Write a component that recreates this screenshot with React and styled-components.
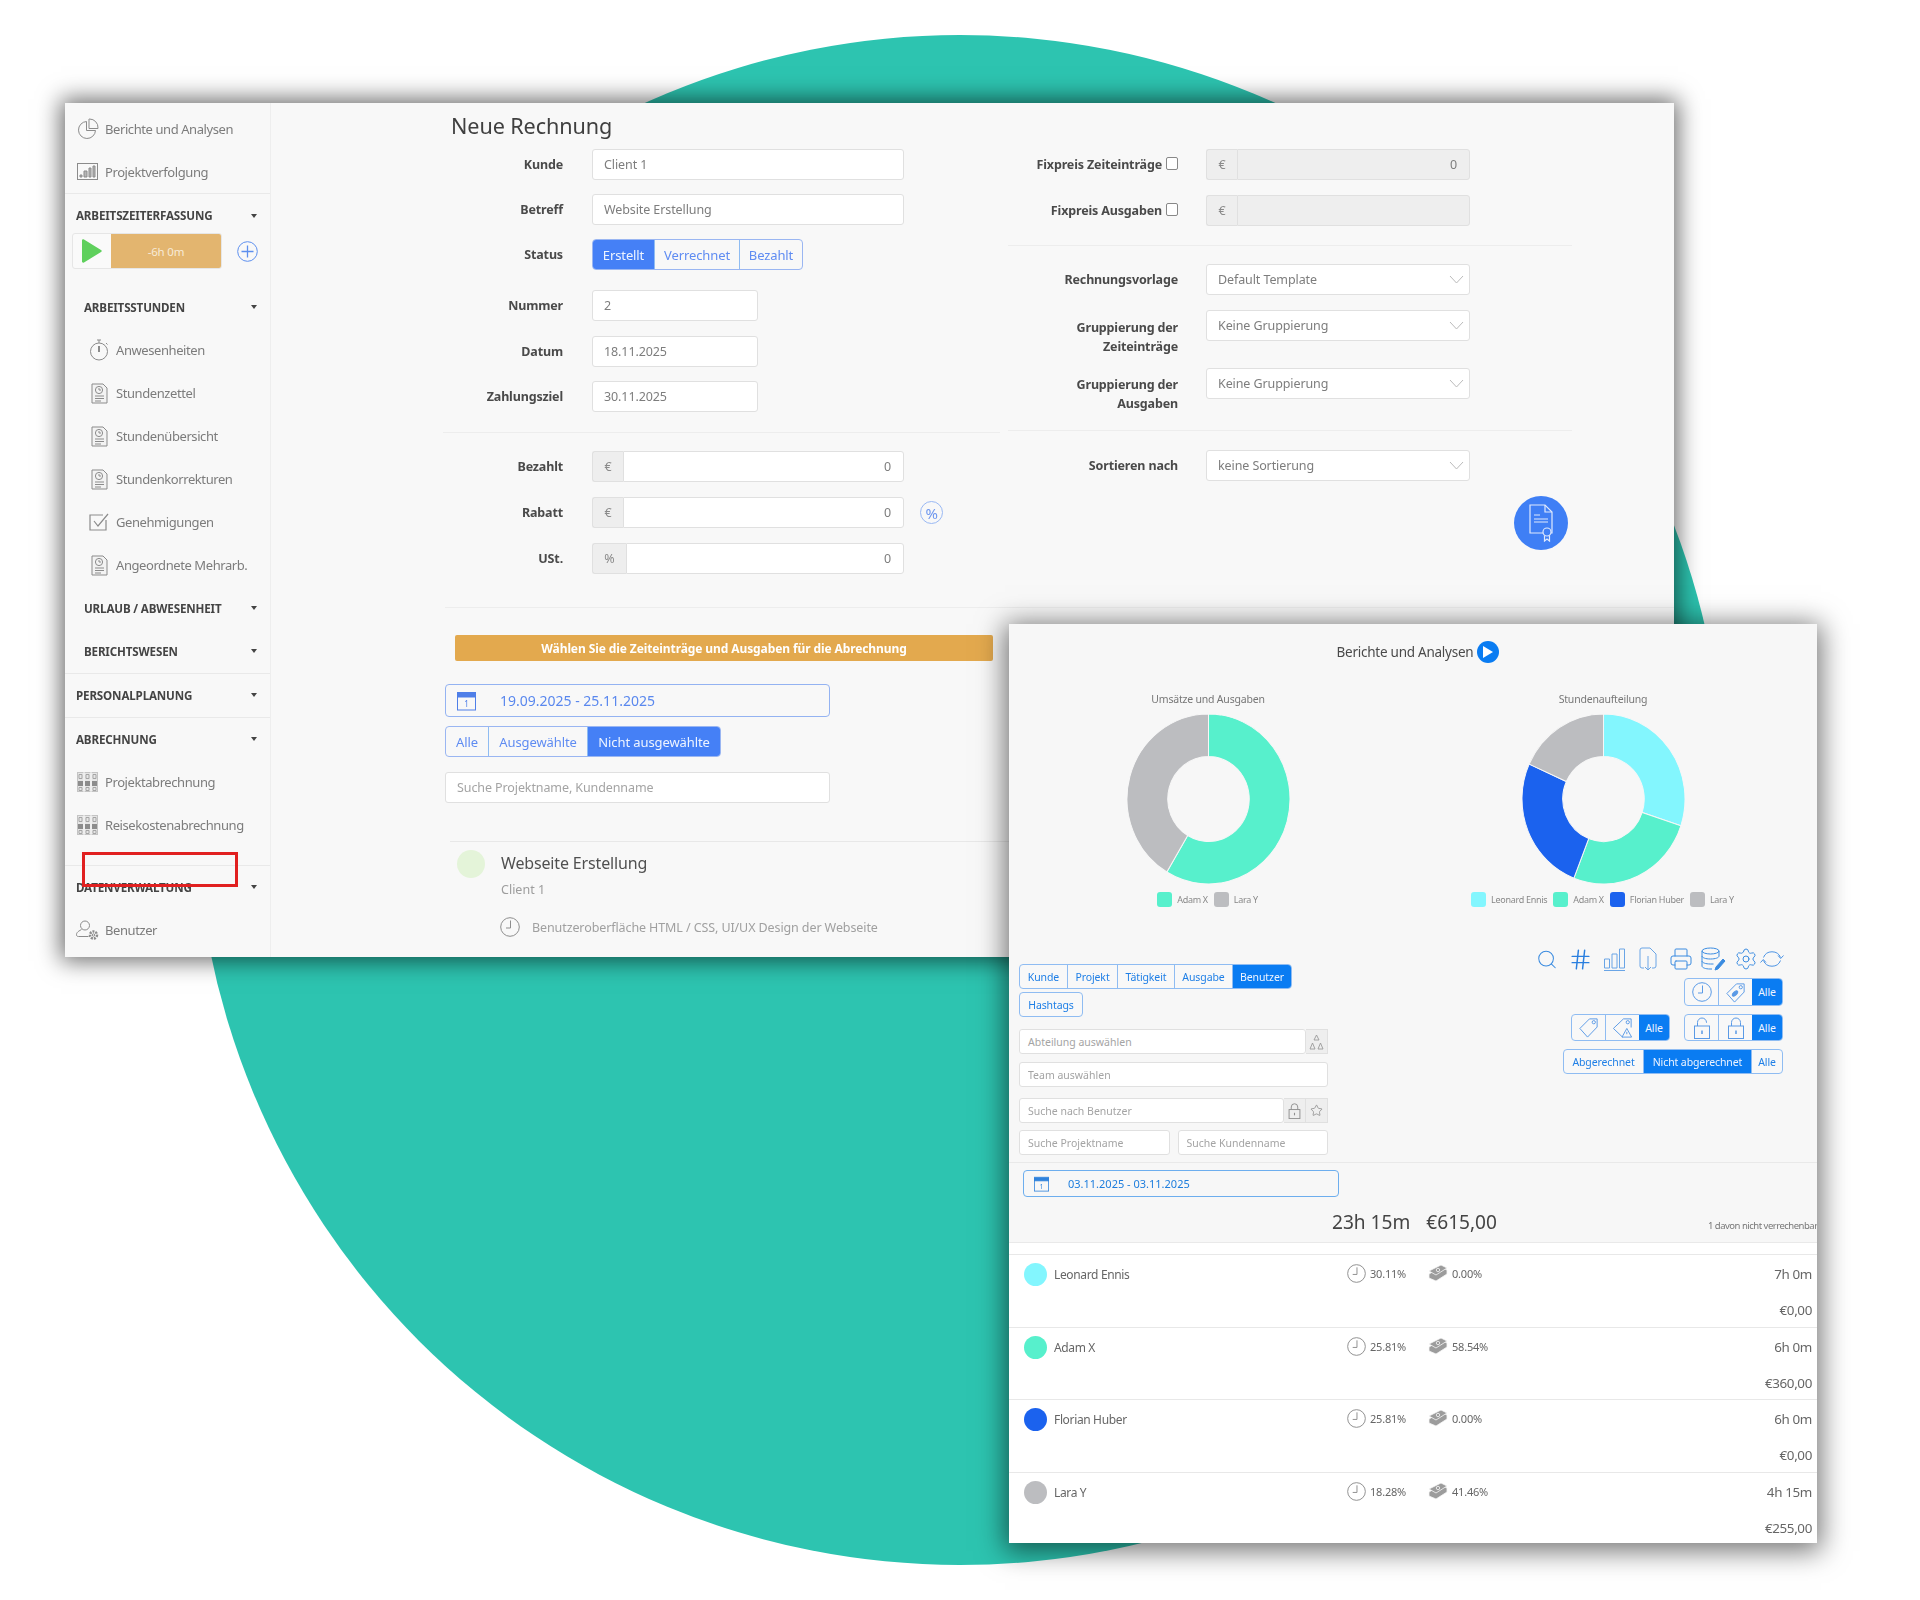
import React from 'react'
import styled, { createGlobalStyle } from 'styled-components'
import { Search, Hash, Printer, Settings, Star } from 'lucide-react'

const GlobalStyle = createGlobalStyle`
  body {
    margin: 0;
    background: #fff;
    font-family: "Noto Sans", "Liberation Sans", sans-serif;
    color: #555;
  }
`

const Page = styled.div`
  position: relative;
  width: 1920px;
  height: 1600px;
  overflow: hidden;
  background: #fff;
`

const Backdrop = styled.div`
  position: absolute;
  left: 195px;
  top: 35px;
  width: 1530px;
  height: 1530px;
  border-radius: 50%;
  background: #2dc4b0;
`

const MainWindow = styled.div`
  position: absolute;
  left: 65px;
  top: 103px;
  width: 1609px;
  height: 854px;
  display: flex;
  overflow: hidden;
  background: #f8f8f8;
  box-shadow: 0 0 22px 4px rgba(0, 0, 0, 0.58);
  filter: blur(0.45px);
`

const ReportWindow = styled.div`
  position: absolute;
  left: 1009px;
  top: 624px;
  width: 808px;
  height: 919px;
  overflow: hidden;
  background: #f7f7f7;
  box-shadow: 0 4px 26px 4px rgba(0, 0, 0, 0.55);
  filter: blur(0.45px);
`

/* sidebar */

const Sidebar = styled.aside`
  position: relative;
  flex: 0 0 205px;
  padding-top: 4px;
  border-right: 1px solid #eeeeee;
  box-sizing: content-box;
`

const NavItem = styled.div`
  display: flex;
  align-items: center;
  height: 43px;
  padding-left: ${(p) => (p.$sub ? '23px' : '10px')};
  font-size: 13px;
  letter-spacing: -0.42px;
  color: #7c7c7c;
`

const NavIcon = styled.span`
  display: flex;
  justify-content: center;
  width: ${(p) => (p.$sub ? '22px' : '25px')};
  margin-right: ${(p) => (p.$sub ? '6px' : '5px')};
`

const NavHeading = styled.div`
  display: flex;
  align-items: center;
  justify-content: space-between;
  height: 43px;
  padding: 0 13px 0 ${(p) => (p.$sub ? '19px' : '11px')};
  font-size: 11.6px;
  font-weight: 700;
  letter-spacing: -0.15px;
  color: #444;
`

const Caret = styled.i`
  width: 0;
  height: 0;
  border-left: 3.5px solid transparent;
  border-right: 3.5px solid transparent;
  border-top: 4px solid #444;
`

const NavRule = styled.div`
  height: 1px;
  margin-top: ${(p) => p.$mt || 0}px;
  background: #e9e9e9;
`

const TimerRow = styled.div`
  display: flex;
  align-items: center;
  height: 36px;
  margin: -4px 0 16.5px 7px;
`

const Timer = styled.div`
  display: flex;
  width: 150px;
  height: 36px;
  border: 1px solid #e6e6e6;
  border-radius: 3px;
  box-sizing: border-box;
  overflow: hidden;
  background: #fafafa;
`

const PlayCell = styled.span`
  display: flex;
  align-items: center;
  justify-content: center;
  width: 38px;
`

const TimerValue = styled.span`
  flex: 1;
  display: flex;
  align-items: center;
  justify-content: center;
  background: #e3b56f;
  color: #f7ead6;
  font-size: 11.5px;
  letter-spacing: -0.2px;
`

const AddCircle = styled.span`
  display: flex;
  margin-left: 15px;
`

const RedMark = styled.div`
  position: absolute;
  left: 17px;
  top: 749px;
  width: 156px;
  height: 35px;
  border: 3px solid #e12020;
  box-sizing: border-box;
`

/* main form */

const Main = styled.main`
  flex: 1;
  min-width: 0;
  padding-left: 172px;
`

const Title = styled.h1`
  margin: 7px 0 7px 8px;
  font-size: 21.6px;
  line-height: 32px;
  font-weight: 400;
  letter-spacing: -0.1px;
  color: #404040;
`

const Columns = styled.div`
  display: flex;
`

const LeftColumn = styled.div`
  width: 557px;
`

const RightColumn = styled.div`
  width: 564px;
  margin-left: 8px;
`

const FormRow = styled.div`
  display: grid;
  grid-template-columns: ${(p) => (p.$wide ? '170px 264px' : '120px 312px auto')};
  column-gap: ${(p) => (p.$wide ? '28px' : '29px')};
  margin-bottom: ${(p) => p.$mb ?? 14}px;
  align-items: start;
`

const FieldLabel = styled.label`
  display: flex;
  justify-content: flex-end;
  align-items: center;
  min-height: 31px;
  text-align: right;
  font-size: 12.5px;
  line-height: 19px;
  font-weight: 700;
  letter-spacing: -0.15px;
  color: #4a4a4a;
  padding-top: ${(p) => p.$pt || 0}px;
`

const Check = styled.i`
  flex: none;
  width: 10px;
  height: 11px;
  margin: -3px 0 0 4px;
  border: 1px solid #888;
  border-radius: 2px;
  background: #fff;
`

const TextField = styled.div`
  display: flex;
  align-items: center;
  height: 31px;
  width: ${(p) => p.$w || '100%'};
  padding: 0 ${(p) => (p.$right ? '12px' : p.$select ? '5px' : '11px')} 0 ${(p) => (p.$right ? '12px' : '11px')};
  justify-content: ${(p) => (p.$right ? 'flex-end' : 'space-between')};
  box-sizing: border-box;
  border: 1px solid #e0e0e0;
  border-radius: 3px;
  background: ${(p) => (p.$off ? '#eeeeee' : '#fff')};
  font-size: 12.5px;
  letter-spacing: -0.1px;
  color: ${(p) => (p.$placeholder ? '#a4a4a4' : '#7d7d7d')};
`

const InputGroup = styled.div`
  display: flex;
  width: 100%;
`

const Addon = styled.span`
  flex: none;
  display: flex;
  align-items: center;
  justify-content: center;
  width: ${(p) => p.$w || 31}px;
  height: 31px;
  box-sizing: border-box;
  border: 1px solid #e0e0e0;
  border-right: 0;
  border-radius: 3px 0 0 3px;
  background: #eeeeee;
  font-size: 12.5px;
  color: #8a8a8a;
`

const GroupField = styled(TextField)`
  flex: 1;
  border-radius: 0 3px 3px 0;
`

const Seg = styled.div`
  display: inline-flex;
  justify-self: start;
  overflow: hidden;
  height: ${(p) => p.$h || 31}px;
  margin-top: ${(p) => p.$mt || 0}px;
  box-sizing: border-box;
  border: 1px solid ${(p) => (p.$vivid ? '#8fbcf2' : '#9ab6f2')};
  border-radius: 4px;
  background: #f8f8f8;
`

const SegBtn = styled.span`
  display: flex;
  align-items: center;
  justify-content: center;
  width: ${(p) => p.$w}px;
  font-size: ${(p) => p.$size || 13}px;
  letter-spacing: -0.1px;
  box-sizing: border-box;
  color: ${(p) => (p.$on ? '#eef4ff' : p.$vivid ? '#1f7fe6' : '#5f8cf2')};
  background: ${(p) => (p.$on ? (p.$vivid ? '#0a7cf2' : '#4580f6') : 'transparent')};
  & + & {
    border-left: 1px solid ${(p) => (p.$vivid ? '#8fbcf2' : '#9ab6f2')};
  }
`

const PercentBadge = styled.span`
  display: flex;
  align-items: center;
  justify-content: center;
  align-self: center;
  width: 23px;
  height: 23px;
  margin-left: -13px;
  border: 1.5px solid #9ab9f4;
  border-radius: 50%;
  box-sizing: border-box;
  font-size: 15px;
  letter-spacing: -0.5px;
  color: #6d96ee;
`

const Rule = styled.div`
  height: 1px;
  margin-bottom: ${(p) => p.$mb || 0}px;
  background: #ededed;
`

const FabRow = styled.div`
  display: flex;
  justify-content: flex-end;
  margin: 15px 4px 0 0;
`

const Fab = styled.span`
  display: flex;
  align-items: center;
  justify-content: center;
  width: 54px;
  height: 54px;
  border-radius: 50%;
  background: #3f7ff5;
`

const Banner = styled.div`
  width: 538px;
  height: 26px;
  margin: 27px 0 23px 10px;
  display: flex;
  align-items: center;
  justify-content: center;
  border-radius: 2px;
  background: #e3a94e;
  color: #fff;
  font-size: 12px;
  font-weight: 700;
  letter-spacing: -0.1px;
`

const DateRange = styled.div`
  display: flex;
  align-items: center;
  width: ${(p) => p.$w}px;
  height: ${(p) => p.$h}px;
  box-sizing: border-box;
  margin: ${(p) => p.$mt || 0}px 0 0 ${(p) => p.$ml || 0}px;
  padding-left: ${(p) => p.$pl}px;
  border: 1px solid ${(p) => (p.$vivid ? '#6daeee' : '#94b3f2')};
  border-radius: 4px;
  font-size: ${(p) => p.$size}px;
  color: ${(p) => (p.$vivid ? '#1d7ddd' : '#5a88ee')};
`

const DateText = styled.span`
  margin-left: ${(p) => p.$ml}px;
`

const BillingBlock = styled.div`
  margin-left: 2px;
`

const SearchField = styled(TextField)`
  width: 385px;
  margin-top: 15px;
`

const ProjectRule = styled.div`
  height: 1px;
  margin: 38px 0 0 5px;
  background: #e8e8e8;
`

const Project = styled.div`
  display: grid;
  grid-template-columns: 28px 1fr;
  column-gap: 16px;
  padding: 8px 0 0 12px;
`

const ProjectDot = styled.span`
  width: 28px;
  height: 28px;
  border-radius: 50%;
  background: #e4f4d9;
`

const ProjectName = styled.div`
  font-size: 16px;
  line-height: 26px;
  letter-spacing: -0.15px;
  color: #505050;
`

const ProjectClient = styled.div`
  margin-top: 2px;
  font-size: 12.5px;
  line-height: 24px;
  color: #9d9d9d;
`

const TaskLine = styled.div`
  display: flex;
  align-items: center;
  gap: 12px;
  margin: 15px 0 0 -1px;
  font-size: 12.5px;
  letter-spacing: -0.1px;
  color: #a0a0a0;
`

/* report window */

const ReportTitle = styled.div`
  display: flex;
  align-items: center;
  justify-content: center;
  height: 22px;
  margin: 17px 0 0 10px;
  gap: 4px;
  font-size: 13.5px;
  letter-spacing: -0.25px;
  color: #4a4a4a;
`

const PlayBadge = styled.span`
  display: flex;
  align-items: center;
  justify-content: center;
  width: 22px;
  height: 22px;
  border-radius: 50%;
  background: #0a7cf2;
`

const Charts = styled.div`
  display: grid;
  grid-template-columns: 398px 392px;
  margin-top: 28px;
`

const ChartCard = styled.div`
  display: flex;
  flex-direction: column;
  align-items: center;
`

const ChartTitle = styled.div`
  font-size: 10.5px;
  line-height: 16px;
  letter-spacing: -0.2px;
  color: #777;
  margin-bottom: 7px;
`

const Legend = styled.div`
  display: flex;
  align-items: center;
  gap: 5px;
  margin-top: 8px;
  font-size: 9px;
  letter-spacing: -0.3px;
  color: #888;
`

const Swatch = styled.i`
  width: 15px;
  height: 15px;
  border-radius: 3px;
  background: ${(p) => p.$c};
`

const LegendText = styled.span`
  margin-right: 1px;
`

const Filters = styled.div`
  display: flex;
  justify-content: space-between;
  padding: 0 34px 0 10px;
  height: 255px;
`

const FilterStack = styled.div`
  display: flex;
  flex-direction: column;
  align-items: flex-start;
  width: 309px;
  padding-top: 57px;
`

const SmallField = styled(TextField)`
  height: 25px;
  padding: 0 8px;
  font-size: 10.5px;
  letter-spacing: 0;
  margin-top: ${(p) => p.$mt || 0}px;
  flex: ${(p) => (p.$grow ? 1 : 'none')};
`

const Line = styled.div`
  display: flex;
  width: 100%;
  gap: ${(p) => p.$gap || 0}px;
  margin-top: ${(p) => p.$mt || 0}px;
`

const SmallAddon = styled.span`
  flex: none;
  display: flex;
  align-items: center;
  justify-content: center;
  width: 22px;
  height: 25px;
  box-sizing: border-box;
  border: 1px solid #e0e0e0;
  border-left: 0;
  background: #eeeeee;
`

const Toolbox = styled.div`
  display: flex;
  flex-direction: column;
  align-items: flex-end;
  padding-top: 38px;
`

const ToolIcons = styled.div`
  display: flex;
  align-items: center;
  height: 28px;
  color: #3a8be0;
  margin-right: -1px;
`

const ToolIcon = styled.span`
  display: flex;
  justify-content: center;
  width: ${(p) => p.$w}px;
`

const ToolLine = styled.div`
  display: flex;
  gap: 14px;
  margin-top: ${(p) => p.$mt}px;
`

const IconBtn = styled.span`
  display: flex;
  align-items: center;
  justify-content: center;
  width: ${(p) => p.$w}px;
  color: #4d94e4;
  & + & {
    border-left: 1px solid #8fbcf2;
  }
`

const SectionRule = styled.div`
  height: 1px;
  background: #e9e9e9;
`

const Totals = styled.div`
  display: flex;
  align-items: center;
  height: 44px;
  box-sizing: border-box;
  padding: 4px 0 0 323px;
  gap: 16px;
  white-space: nowrap;
  font-size: 19.1px;
  color: #444;
  margin-top: 1px;
`

const TotalNote = styled.span`
  flex: none;
  margin: 7px 0 0 195px;
  font-size: 9.5px;
  letter-spacing: -0.5px;
  color: #777;
`

const UserList = styled.div`
  background: #fff;
  padding-top: 11px;
`

const UserRow = styled.div`
  display: grid;
  grid-template-columns: 323px 81px 1fr auto;
  height: 72.5px;
  box-sizing: border-box;
  padding: 8px 5px 0 15px;
  border-top: 1px solid #e8e8e8;
  font-size: 12px;
  letter-spacing: -0.35px;
  color: #666;
`

const UserName = styled.div`
  display: flex;
  align-items: center;
  align-self: start;
  gap: 7px;
`

const UserDot = styled.i`
  width: 23px;
  height: 23px;
  border-radius: 50%;
  background: ${(p) => p.$c};
`

const Stat = styled.div`
  display: flex;
  align-items: center;
  align-self: start;
  height: 21px;
  gap: 4px;
  font-size: 11px;
  letter-spacing: -0.2px;
`

const Amounts = styled.div`
  display: flex;
  flex-direction: column;
  align-items: flex-end;
  font-size: 13.4px;
  line-height: 23px;
  color: #666;
  row-gap: 13px;
`

/* drawn icons */

const Gray = { fill: 'none', stroke: '#8b8b8b', strokeWidth: 1 }

const PieIcon = () => (
  <svg width="22" height="22" viewBox="0 0 22 22" {...Gray}>
    <path d="M9.500 3.500a8.500 8.500 0 1 0 9 9h-9z" />
    <path d="M12 1h.5a8.500 8.500 0 0 1 8.500 9v.5h-9z" />
  </svg>
)

const BarsIcon = () => (
  <svg width="21" height="17" viewBox="0 0 21 17" {...Gray}>
    <rect x="0.500" y="0.500" width="20" height="16" />
    <path d="M3 14h2v-2h-2zM7 14h3v-6h-3zM12 14h2v-9h-2zM16 14h2v-11h-2z" fill="#b5b5b5" />
  </svg>
)

const WatchIcon = () => (
  <svg width="20" height="22" viewBox="0 0 20 22" {...Gray}>
    <circle cx="10" cy="12.500" r="8.500" />
    <path d="M10 1v3M8 1h4M17 4l1.500 1.500" />
    <path d="M10 7v6" strokeWidth="2" />
  </svg>
)

const SheetIcon = () => (
  <svg width="17" height="21" viewBox="0 0 17 21" {...Gray}>
    <path d="M1 1h11l4 4v15H1z" fill="#f3f3f3" />
    <circle cx="8" cy="7" r="3.600" />
    <path d="M8 5v2h2M4 13h9M4 15.500h9M4 18h6" />
  </svg>
)

const TickBoxIcon = () => (
  <svg width="21" height="18" viewBox="0 0 21 18" {...Gray}>
    <path d="M17 7v10H1V2h13" strokeWidth="1.200" />
    <path d="M5 8l4 5 10-12" strokeWidth="1.200" />
  </svg>
)

const LedgerIcon = () => (
  <svg width="21" height="20" viewBox="0 0 21 20" fill="none">
    <rect x="0.500" y="0.500" width="20" height="19" stroke="#c4c4c4" fill="#e6e6e6" />
    <path d="M7 0v20M14 0v20" stroke="#f7f7f7" />
    <path d="M1 9h5v5H1zM8 9h5v5H8zM15 9h5v5h-5z" fill="#8c8c8c" />
    <path d="M2 2.500h3v4H2zM9 2.500h3v4H9zM16 2.500h3v4h-3zM2 15.500h3v3H2zM9 15.500h3v3H9zM16 15.500h3v3h-3z" stroke="#a5a5a5" />
  </svg>
)

const UserGearIcon = () => (
  <svg width="23" height="21" viewBox="0 0 23 21" {...Gray}>
    <circle cx="9" cy="5.500" r="4.500" />
    <path d="M5.500 9.500C1 12 .5 13 .5 15c0 1 1 1.500 2 1.500h10" />
    <circle cx="17.500" cy="15" r="3.500" strokeWidth="2.500" strokeDasharray="2 1" />
    <circle cx="17.500" cy="15" r="1.200" />
  </svg>
)

const PlayGreen = () => (
  <svg width="20" height="24" viewBox="0 0 20 24">
    <path d="M0 1.500c0-1 1-1.500 2-1L19 11c1 .600 1 1.400 0 2L2 23.500c-1 .500-2 0-2-1z" fill="#5fd05d" />
  </svg>
)

const PlusCircle = () => (
  <svg width="21" height="21" viewBox="0 0 21 21" fill="none" stroke="#5d8fee" strokeWidth="1">
    <circle cx="10.500" cy="10.500" r="9.800" />
    <path d="M10.500 4.500v12M4.500 10.500h12" strokeWidth="1.300" />
  </svg>
)

const Chevron = () => (
  <svg width="15" height="9" viewBox="0 0 15 9" fill="none" stroke="#bbbbbb" strokeWidth="1">
    <path d="M1 1l6.500 7L14 1" />
  </svg>
)

const ClockIcon = ({ size = 20, color = '#8d8d8d' }) => (
  <svg width={size} height={size} viewBox="0 0 20 20" fill="none" stroke={color} strokeWidth="1">
    <circle cx="10" cy="10" r="9.300" />
    <path d="M10.500 3.500v7.500H6" />
  </svg>
)

const CertIcon = () => (
  <svg width="26" height="38" viewBox="0 0 26 38" fill="none" stroke="#dfe9fd" strokeWidth="1.200">
    <path d="M17 29H2V1h15l7 7v21h-1" />
    <path d="M17 1v7h7M6 11h6M6 15h14M6 18h14" />
    <circle cx="19" cy="28" r="4" fill="#3f7ff5" />
    <path d="M16.500 31.500V37l2.500-2 2.500 2v-5.500" />
  </svg>
)

const CalendarIcon = ({ color, w = 19 }) => (
  <svg width={w} height={w + 1} viewBox="0 0 19 20" fill="none" stroke={color}>
    <rect x="0.500" y="3" width="18" height="16" />
    <path d="M0 1.500h19V6H0z" fill={color} />
    <text x="9.500" y="16" fontSize="8" fontFamily="Noto Sans" textAnchor="middle" fill={color} stroke="none">1</text>
  </svg>
)

const TreeIcon = () => (
  <svg width="15" height="16" viewBox="0 0 15 16" fill="none" stroke="#9a9a9a" strokeWidth=".9">
    <path d="M7.500 1l2.500 5H5zM3.500 9l2.500 6H1zM11.500 9l2.500 6H9z" />
  </svg>
)

const ChartIcon = () => (
  <svg width="24" height="24" viewBox="0 0 24 24" fill="none" stroke="#6aa5e6" strokeWidth="1">
    <path d="M1.500 12h5v9h-5zM9 7h5v14H9zM16.500 2h5v19h-5zM1 23.500h21" />
  </svg>
)

const DocDownIcon = () => (
  <svg width="18" height="24" viewBox="0 0 18 24" fill="none" stroke="#6aa5e6" strokeWidth="1">
    <path d="M5 21H3a2 2 0 0 1-2-2V3a2 2 0 0 1 2-2h8l6 6v12a2 2 0 0 1-2 2h-2" />
    <path d="M9 9v14M6 20l3 3 3-3" />
  </svg>
)

const DatabaseIcon = () => (
  <svg width="25" height="25" viewBox="0 0 25 25" fill="none" stroke="#3a8be0" strokeWidth="1">
    <ellipse cx="9.500" cy="4" rx="8.500" ry="3" />
    <path d="M1 4v15c0 1.700 3.500 3 8 3h2M1 9c0 1.700 3.500 3 8.500 3S18 10.700 18 9V4M1 14c0 1.700 3.500 3 8.500 3h3" />
    <path d="M14 23l1-3L22 12l2 2-7 8z" fill="#3a8be0" />
  </svg>
)

const RefreshIcon = () => (
  <svg width="24" height="24" viewBox="0 0 24 24" fill="none" stroke="#4d94e4" strokeWidth="1">
    <path d="M3.500 10.500a9 8.500 0 0 1 17 0" />
    <path d="M20.500 13.500a9 8.500 0 0 1-17 0" />
    <path d="M18 8.500l2.700 3 2.800-3M.5 15.500l2.800-3 2.700 3" />
  </svg>
)

const TagIcon = ({ mark }) => (
  <svg width="23" height="23" viewBox="0 0 24 24" fill="none" stroke="#5a9ae6" strokeWidth="1">
    <path d={mark === 'warn' ? 'M12 22l-9.500-9L13 3h8v9' : 'M3 13L13 3h8v8.500L11 22z'} />
    <circle cx="17.500" cy="6.500" r="1.700" />
    {mark === 'money' && <ellipse cx="11.500" cy="13" rx="3.500" ry="1.800" transform="rotate(-45 11.500 13)" fill="#5a9ae6" />}
    {mark === 'warn' && <path d="M16.500 13l5 9h-10zM16.500 16.500v2.500" />}
  </svg>
)

const LockIcon = ({ open, small, color = '#5a9ae6' }) => (
  <svg width={small ? 13 : 18} height={small ? 16 : 22} viewBox="0 0 18 22" fill="none" stroke={color} strokeWidth={small ? 1.300 : 1}>
    <rect x="1.500" y="9" width="15" height="12.500" />
    <path d={open ? 'M4.500 9V5.500a4.500 4.500 0 0 1 9 0V6' : 'M4.500 9V5.500a4.500 4.500 0 0 1 9 0V9'} />
    <path d="M9 13.500v3.500" strokeWidth="1.500" />
  </svg>
)

const MoneyIcon = () => (
  <svg width="20" height="17" viewBox="0 0 20 17" fill="#9c9c9c" stroke="#f6f6f6" strokeWidth=".8">
    <path d="M1 9l12-7 6 3v4L8 16 1 13z" />
    <path d="M1 6l12-6 6 3L8 10z" />
    <circle cx="10" cy="5" r="1.700" />
  </svg>
)

/* data */

const segment = (from, to) => {
  const pt = (frac, r) => {
    const a = frac * Math.PI * 2 - Math.PI / 2
    return `${(Math.cos(a) * r).toFixed(3)} ${(Math.sin(a) * r).toFixed(3)}`
  }
  const large = to - from > 0.5 ? 1 : 0
  return `M${pt(from, 100)}A100 100 0 ${large} 1 ${pt(to, 100)}L${pt(to, 50)}A50 50 0 ${large} 0 ${pt(from, 50)}Z`
}

const Donut = ({ slices }) => {
  let at = 0
  return (
    <svg width="163" height="170" viewBox="-100 -100 200 200" preserveAspectRatio="none">
      {slices.map((s) => {
        const d = segment(at, at + s.value / 100)
        at += s.value / 100
        return <path key={s.name} d={d} fill={s.color} stroke="#f7f7f7" strokeWidth="1.200" />
      })}
    </svg>
  )
}

const COLORS = { leonard: '#83f6fe', adam: '#57f0cc', florian: '#1b62ee', lara: '#bcbdc0' }

const revenue = [
  { name: 'Adam X', value: 58.54, color: COLORS.adam },
  { name: 'Lara Y', value: 41.46, color: COLORS.lara },
]

const hours = [
  { name: 'Leonard Ennis', value: 30.11, color: COLORS.leonard },
  { name: 'Adam X', value: 25.81, color: COLORS.adam },
  { name: 'Florian Huber', value: 25.81, color: COLORS.florian },
  { name: 'Lara Y', value: 18.28, color: COLORS.lara },
]

const users = [
  { name: 'Leonard Ennis', color: COLORS.leonard, time: '30.11%', money: '0.00%', hours: '7h 0m', total: '€0,00' },
  { name: 'Adam X', color: COLORS.adam, time: '25.81%', money: '58.54%', hours: '6h 0m', total: '€360,00' },
  { name: 'Florian Huber', color: COLORS.florian, time: '25.81%', money: '0.00%', hours: '6h 0m', total: '€0,00' },
  { name: 'Lara Y', color: COLORS.lara, time: '18.28%', money: '41.46%', hours: '4h 15m', total: '€255,00' },
]

const Heading = ({ sub, children }) => (
  <NavHeading $sub={sub}>
    {children}
    <Caret />
  </NavHeading>
)

const Item = ({ sub, icon, children }) => (
  <NavItem $sub={sub}>
    <NavIcon $sub={sub}>{icon}</NavIcon>
    {children}
  </NavItem>
)

const Field = ({ label, labelPt, wide, mb, children }) => (
  <FormRow $wide={wide} $mb={mb}>
    <FieldLabel $pt={labelPt}>{label}</FieldLabel>
    {children}
  </FormRow>
)

const Select = ({ children }) => (
  <TextField $select>
    {children}
    <Chevron />
  </TextField>
)

const ChartLegend = ({ slices }) => (
  <Legend>
    {slices.map((s) => (
      <React.Fragment key={s.name}>
        <Swatch $c={s.color} />
        <LegendText>{s.name}</LegendText>
      </React.Fragment>
    ))}
  </Legend>
)

const App = () => {
  return (
    <Page>
      <GlobalStyle />
      <Backdrop />
      <MainWindow>
        <Sidebar>
          <Item icon={<PieIcon />}>Berichte und Analysen</Item>
          <Item icon={<BarsIcon />}>Projektverfolgung</Item>
          <NavRule />
          <Heading>ARBEITSZEITERFASSUNG</Heading>
          <TimerRow>
            <Timer>
              <PlayCell><PlayGreen /></PlayCell>
              <TimerValue>-6h 0m</TimerValue>
            </Timer>
            <AddCircle><PlusCircle /></AddCircle>
          </TimerRow>
          <Heading sub>ARBEITSSTUNDEN</Heading>
          <Item sub icon={<WatchIcon />}>Anwesenheiten</Item>
          <Item sub icon={<SheetIcon />}>Stundenzettel</Item>
          <Item sub icon={<SheetIcon />}>Stundenübersicht</Item>
          <Item sub icon={<SheetIcon />}>Stundenkorrekturen</Item>
          <Item sub icon={<TickBoxIcon />}>Genehmigungen</Item>
          <Item sub icon={<SheetIcon />}>Angeordnete Mehrarb.</Item>
          <Heading sub>URLAUB / ABWESENHEIT</Heading>
          <Heading sub>BERICHTSWESEN</Heading>
          <NavRule />
          <Heading>PERSONALPLANUNG</Heading>
          <NavRule />
          <Heading>ABRECHNUNG</Heading>
          <Item icon={<LedgerIcon />}>Projektabrechnung</Item>
          <Item icon={<LedgerIcon />}>Reisekostenabrechnung</Item>
          <NavRule $mt={18} />
          <Heading>DATENVERWALTUNG</Heading>
          <Item icon={<UserGearIcon />}>Benutzer</Item>
          <RedMark />
        </Sidebar>

        <Main>
          <Title>Neue Rechnung</Title>
          <Columns>
            <LeftColumn>
              <Field label="Kunde"><TextField>Client 1</TextField></Field>
              <Field label="Betreff"><TextField>Website Erstellung</TextField></Field>
              <Field label="Status" mb={20}>
                <Seg>
                  <SegBtn $on $w={61}>Erstellt</SegBtn>
                  <SegBtn $w={85}>Verrechnet</SegBtn>
                  <SegBtn $w={63}>Bezahlt</SegBtn>
                </Seg>
              </Field>
              <Field label="Nummer" mb={15}><TextField $w="166px">2</TextField></Field>
              <Field label="Datum" mb={14}><TextField $w="166px">18.11.2025</TextField></Field>
              <Field label="Zahlungsziel" mb={20}><TextField $w="166px">30.11.2025</TextField></Field>
              <Rule $mb={18} />
              <Field label="Bezahlt" mb={15}>
                <InputGroup><Addon>€</Addon><GroupField $right>0</GroupField></InputGroup>
              </Field>
              <Field label="Rabatt" mb={15}>
                <InputGroup><Addon>€</Addon><GroupField $right>0</GroupField></InputGroup>
                <PercentBadge>%</PercentBadge>
              </Field>
              <Field label="USt." mb={33}>
                <InputGroup><Addon $w={34}>%</Addon><GroupField $right>0</GroupField></InputGroup>
              </Field>
            </LeftColumn>
            <RightColumn>
              <Field wide label={<>Fixpreis Zeiteinträge<Check /></>} mb={15}>
                <InputGroup><Addon>€</Addon><GroupField $right $off>0</GroupField></InputGroup>
              </Field>
              <Field wide label={<>Fixpreis Ausgaben<Check /></>} mb={19}>
                <InputGroup><Addon>€</Addon><GroupField $off /></InputGroup>
              </Field>
              <Rule $mb={18} />
              <Field wide label="Rechnungsvorlage" mb={15}><Select>Default Template</Select></Field>
              <Field wide label={<>Gruppierung der<br />Zeiteinträge</>} labelPt={8} mb={12}><Select>Keine Gruppierung</Select></Field>
              <Field wide label={<>Gruppierung der<br />Ausgaben</>} labelPt={7} mb={17}><Select>Keine Gruppierung</Select></Field>
              <Rule $mb={19} />
              <Field wide label="Sortieren nach" mb={0}><Select>keine Sortierung</Select></Field>
              <FabRow><Fab><CertIcon /></Fab></FabRow>
            </RightColumn>
          </Columns>
          <BillingBlock>
            <Rule />
            <Banner>Wählen Sie die Zeiteinträge und Ausgaben für die Abrechnung</Banner>
            <DateRange $w={385} $h={33} $pl={11} $size={14}>
              <CalendarIcon color="#4f7fe8" />
              <DateText $ml={24}>19.09.2025 - 25.11.2025</DateText>
            </DateRange>
            <Seg $mt={9}>
              <SegBtn $w={42}>Alle</SegBtn>
              <SegBtn $w={99}>Ausgewählte</SegBtn>
              <SegBtn $on $w={133}>Nicht ausgewählte</SegBtn>
            </Seg>
            <SearchField $placeholder>Suche Projektname, Kundenname</SearchField>
            <ProjectRule />
            <Project>
              <ProjectDot />
              <div>
                <ProjectName>Webseite Erstellung</ProjectName>
                <ProjectClient>Client 1</ProjectClient>
                <TaskLine>
                  <ClockIcon />
                  Benutzeroberfläche HTML / CSS, UI/UX Design der Webseite
                </TaskLine>
              </div>
            </Project>
          </BillingBlock>
        </Main>
      </MainWindow>

      <ReportWindow>
        <ReportTitle>
          Berichte und Analysen
          <PlayBadge>
            <svg width="10" height="12" viewBox="0 0 10 12"><path d="M0 0l10 6-10 6z" fill="#fff" /></svg>
          </PlayBadge>
        </ReportTitle>
        <Charts>
          <ChartCard>
            <ChartTitle>Umsätze und Ausgaben</ChartTitle>
            <Donut slices={revenue} />
            <ChartLegend slices={revenue} />
          </ChartCard>
          <ChartCard>
            <ChartTitle>Stundenaufteilung</ChartTitle>
            <Donut slices={hours} />
            <ChartLegend slices={hours} />
          </ChartCard>
        </Charts>

        <Filters>
          <FilterStack>
            <Seg $vivid $h={25}>
              <SegBtn $vivid $size={10.5} $w={47}>Kunde</SegBtn>
              <SegBtn $vivid $size={10.5} $w={50}>Projekt</SegBtn>
              <SegBtn $vivid $size={10.5} $w={57}>Tätigkeit</SegBtn>
              <SegBtn $vivid $size={10.5} $w={58}>Ausgabe</SegBtn>
              <SegBtn $vivid $on $size={10.5} $w={59}>Benutzer</SegBtn>
            </Seg>
            <Seg $vivid $h={25} $mt={3}>
              <SegBtn $vivid $size={10.5} $w={62}>Hashtags</SegBtn>
            </Seg>
            <Line $mt={12}>
              <SmallField $grow $placeholder>Abteilung auswählen</SmallField>
              <SmallAddon><TreeIcon /></SmallAddon>
            </Line>
            <SmallField $placeholder $mt={8}>Team auswählen</SmallField>
            <Line $mt={11}>
              <SmallField $grow $placeholder>Suche nach Benutzer</SmallField>
              <SmallAddon><LockIcon small color="#8f8f8f" /></SmallAddon>
              <SmallAddon><Star size={13} strokeWidth={1.2} color="#777" /></SmallAddon>
            </Line>
            <Line $mt={7} $gap={8}>
              <SmallField $grow $placeholder>Suche Projektname</SmallField>
              <SmallField $grow $placeholder>Suche Kundenname</SmallField>
            </Line>
          </FilterStack>
          <Toolbox>
            <ToolIcons>
              <ToolIcon $w={22}><Search size={23} strokeWidth={1.1} /></ToolIcon>
              <ToolIcon $w={44}><Hash size={25} strokeWidth={1.4} color="#2a7fdf" /></ToolIcon>
              <ToolIcon $w={26}><ChartIcon /></ToolIcon>
              <ToolIcon $w={40}><DocDownIcon /></ToolIcon>
              <ToolIcon $w={26}><Printer size={24} strokeWidth={1} /></ToolIcon>
              <ToolIcon $w={38}><DatabaseIcon /></ToolIcon>
              <ToolIcon $w={28}><Settings size={24} strokeWidth={1} /></ToolIcon>
              <ToolIcon $w={24}><RefreshIcon /></ToolIcon>
            </ToolIcons>
            <ToolLine $mt={5}>
              <Seg $vivid $h={28}>
                <IconBtn $w={33}><ClockIcon size={20} color="#5a9ae6" /></IconBtn>
                <IconBtn $w={33}><TagIcon mark="money" /></IconBtn>
                <SegBtn $vivid $on $size={10.5} $w={30}>Alle</SegBtn>
              </Seg>
            </ToolLine>
            <ToolLine $mt={8}>
              <Seg $vivid $h={27}>
                <IconBtn $w={33}><TagIcon /></IconBtn>
                <IconBtn $w={33}><TagIcon mark="warn" /></IconBtn>
                <SegBtn $vivid $on $size={10.5} $w={30}>Alle</SegBtn>
              </Seg>
              <Seg $vivid $h={27}>
                <IconBtn $w={33}><LockIcon open /></IconBtn>
                <IconBtn $w={33}><LockIcon /></IconBtn>
                <SegBtn $vivid $on $size={10.5} $w={30}>Alle</SegBtn>
              </Seg>
            </ToolLine>
            <ToolLine $mt={8}>
              <Seg $vivid $h={25}>
                <SegBtn $vivid $size={10.5} $w={79}>Abgerechnet</SegBtn>
                <SegBtn $vivid $on $size={10.5} $w={108}>Nicht abgerechnet</SegBtn>
                <SegBtn $vivid $size={10.5} $w={31}>Alle</SegBtn>
              </Seg>
            </ToolLine>
          </Toolbox>
        </Filters>

        <SectionRule />
        <DateRange $vivid $w={316} $h={27} $mt={7} $ml={14} $pl={10} $size={11}>
          <CalendarIcon color="#2f82dc" w={15} />
          <DateText $ml={19}>03.11.2025 - 03.11.2025</DateText>
        </DateRange>
        <Totals>
          <span>23h 15m</span>
          <span>€615,00</span>
          <TotalNote>1 davon nicht verrechenbar</TotalNote>
        </Totals>
        <SectionRule />
        <UserList>
          {users.map((u) => (
            <UserRow key={u.name}>
              <UserName>
                <UserDot $c={u.color} />
                {u.name}
              </UserName>
              <Stat>
                <ClockIcon size={19} color="#8c8c8c" />
                {u.time}
              </Stat>
              <Stat>
                <MoneyIcon />
                {u.money}
              </Stat>
              <Amounts>
                <span>{u.hours}</span>
                <span>{u.total}</span>
              </Amounts>
            </UserRow>
          ))}
        </UserList>
      </ReportWindow>
    </Page>
  )
}

export default App
